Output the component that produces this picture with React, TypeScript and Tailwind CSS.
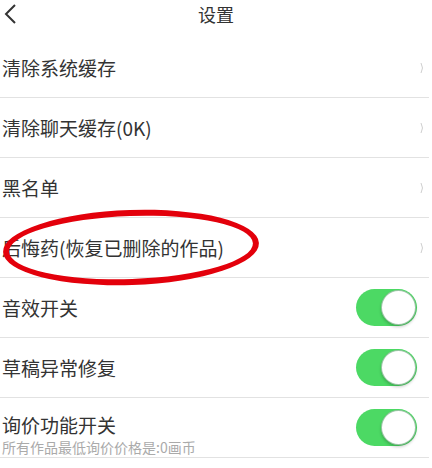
import React from 'react';

const font = { fontFamily: '"Noto Sans CJK SC", "Liberation Sans", sans-serif' };

// Interruptor estilo iOS
const Toggle: React.FC = () => (
    <div className="relative w-[61px] h-[37px] rounded-full bg-[#4cd964] shrink-0">
        <div className="absolute right-[1px] top-[1px] w-[35px] h-[35px] rounded-full bg-white border border-[#5a9e6a]/60 shadow-[0_2px_3px_rgba(0,0,0,0.2)]" />
    </div>
);

const Chevron: React.FC = () => (
    <svg width="5" height="12" viewBox="0 0 5 12" className="shrink-0">
        <path d="M1 1 Q4 6 1 11" fill="none" stroke="#cfcfcf" strokeWidth="1" />
    </svg>
);

interface RowProps {
    label: string;
}

const Row: React.FC<RowProps> = ({ label }) => (
    <div className="h-[60px] flex items-center justify-between pl-[2px] pr-[4px] border-b border-[#e2e2e2] mr-[3px]">
        <span className="text-[19px] leading-[22px] text-[#333]">{label}</span>
        <Chevron />
    </div>
);

export default function App() {
    return (
        <div className="w-[432px] h-[468px] bg-white overflow-hidden relative" style={font}>
            {/* Header */}
            <div className="h-[38px] relative flex justify-center pt-[3px]">
                <svg width="14" height="20" viewBox="0 0 14 20" className="absolute left-[4px] top-[4px]">
                    <path d="M11 1 L2 10 L11 19" fill="none" stroke="#333" strokeWidth="2" />
                </svg>
                <span className="text-[18px] leading-[22px] text-[#333]">设置</span>
            </div>

            <Row label="清除系统缓存" />
            <Row label="清除聊天缓存(0K)" />
            <Row label="黑名单" />
            <Row label="后悔药(恢复已删除的作品)" />
            <div className="mr-[3px]">
                <div className="h-[60px] flex items-center justify-between pl-[2px] pr-[12px] border-b border-[#e2e2e2]">
                    <span className="text-[19px] leading-[22px] text-[#333]">音效开关</span>
                    <Toggle />
                </div>
                <div className="h-[60px] flex items-center justify-between pl-[2px] pr-[12px] border-b border-[#e2e2e2]">
                    <span className="text-[19px] leading-[22px] text-[#333]">草稿异常修复</span>
                    <Toggle />
                </div>
                <div className="h-[60px] flex items-center justify-between pl-[2px] pr-[12px] border-b border-[#e2e2e2]">
                    <div className="flex flex-col gap-[4px] pt-[14px]">
                        <span className="text-[19px] leading-[22px] text-[#333]">询价功能开关</span>
                        <span className="text-[14px] leading-[15px] text-[#aaa]">所有作品最低询价价格是:0画币</span>
                    </div>
                    <Toggle />
                </div>
            </div>

            {/* Marcação vermelha */}
            <div className="absolute left-[3px] top-[210px] w-[256px] h-[75px] rounded-[50%] border-[6px] border-[#e3000b] -rotate-[2deg]" />
        </div>
    );
}
